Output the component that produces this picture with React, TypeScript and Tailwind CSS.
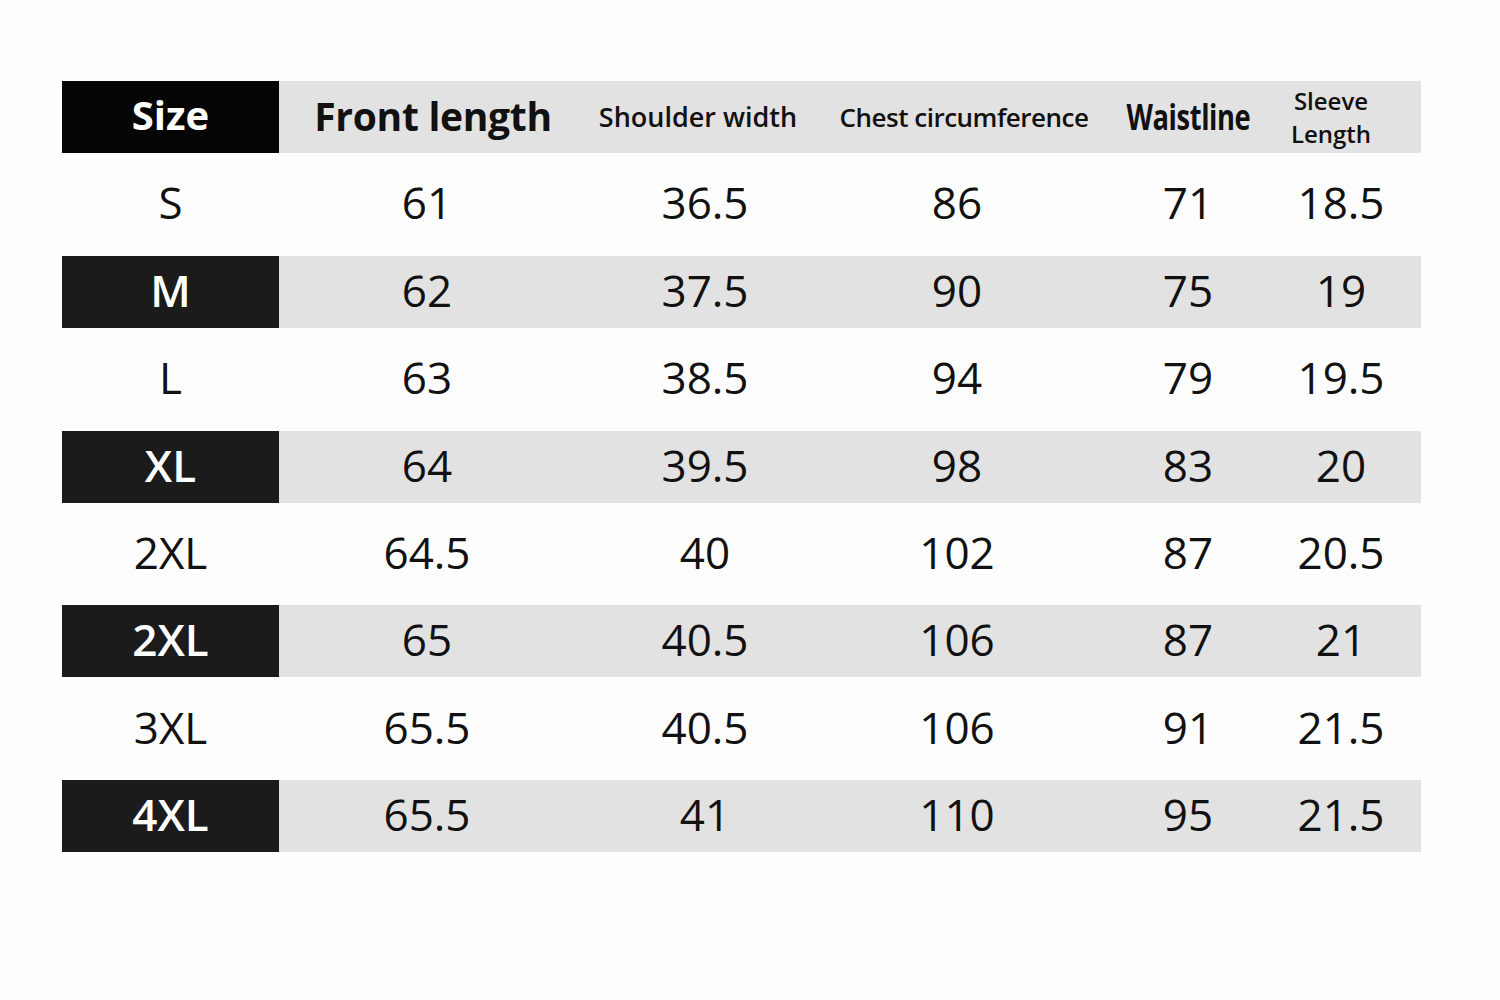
const rows = [
  { size: "S", v: ["61", "36.5", "86", "71", "18.5"] },
  { size: "M", v: ["62", "37.5", "90", "75", "19"] },
  { size: "L", v: ["63", "38.5", "94", "79", "19.5"] },
  { size: "XL", v: ["64", "39.5", "98", "83", "20"] },
  { size: "2XL", v: ["64.5", "40", "102", "87", "20.5"] },
  { size: "2XL", v: ["65", "40.5", "106", "87", "21"] },
  { size: "3XL", v: ["65.5", "40.5", "106", "91", "21.5"] },
  { size: "4XL", v: ["65.5", "41", "110", "95", "21.5"] },
];

const cols = "grid grid-cols-[217px_296px_260px_244px_218px_88px_36px]";

export default function App() {
  return (
    <div className="min-h-screen w-[1500px] bg-[#fdfdfd] pt-[81px] pl-[62px] font-['Open_Sans',sans-serif] text-[#111]">
      <div className="flex w-[1359px] flex-col gap-[15.4px]">
        <div className={`${cols} h-[72px] items-center bg-[#e2e2e2] whitespace-nowrap`}>
          <div className="flex h-full items-center justify-center bg-[#050505] text-[40px] font-bold text-white">
            <span className="-translate-y-[2px]">Size</span>
          </div>
          <div className="flex justify-center text-[39px] font-bold tracking-[-0.3px]">
            <span className="translate-x-[6px] -translate-y-[1px]">Front length</span>
          </div>
          <div className="flex justify-center text-[27px] font-semibold">
            <span className="-translate-x-[7px]">Shoulder width</span>
          </div>
          <div className="flex justify-center text-[26px] font-semibold tracking-[-0.5px]">
            <span className="translate-x-[7px]">Chest circumference</span>
          </div>
          <div className="flex justify-center">
            <span className="inline-block scale-x-[0.78] text-[35px] font-bold tracking-[-0.5px]">
              Waistline
            </span>
          </div>
          <div className="flex justify-center">
            <div className="-translate-x-[10px] text-center text-[24px] leading-[33px] font-semibold">
              Sleeve
              <br />
              Length
            </div>
          </div>
          <div />
        </div>
        {rows.map((r, i) => {
          const shaded = i % 2 === 1;
          return (
            <div
              key={i}
              className={`${cols} h-[72px] items-center text-[44px] ${shaded ? "bg-[#e2e2e2]" : ""}`}
            >
              <div
                className={`flex h-full items-center justify-center ${
                  shaded ? "bg-[#1b1b1b] font-semibold text-white" : ""
                }`}
              >
                <span className="-translate-y-[2px]">{r.size}</span>
              </div>
              {r.v.map((x, j) => (
                <div key={j} className="flex justify-center">
                  <span className="-translate-y-[2px]">{x}</span>
                </div>
              ))}
              <div />
            </div>
          );
        })}
      </div>
    </div>
  );
}
